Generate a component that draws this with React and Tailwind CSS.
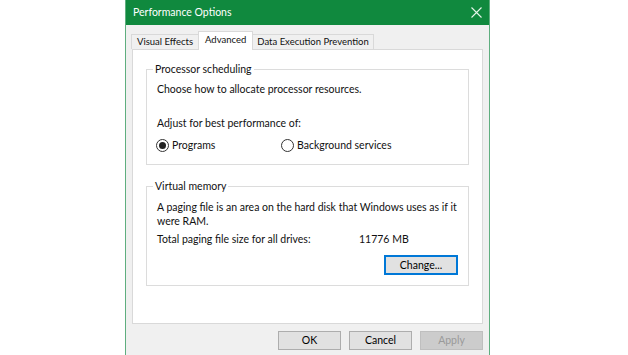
import React from "react";

const font = { fontFamily: 'Lato, "Noto Sans", sans-serif' };

function Radio({ checked, label }) {
  return (
    <label className="flex items-center gap-[3px]">
      <span className="w-[13px] h-[13px] rounded-full border border-[#333] bg-white flex items-center justify-center">
        {checked && <span className="w-[7px] h-[7px] rounded-full bg-[#222]" />}
      </span>
      <span>{label}</span>
    </label>
  );
}

function Button({ children, primary, disabled, className = "" }) {
  return (
    <button
      className={`h-[19px] flex items-center justify-center leading-none ${
        disabled
          ? "bg-[#cccccc] border border-[#bfbfbf] text-[#9a9a9a]"
          : primary
            ? "bg-[#e1e1e1] border-2 border-[#0078d7] text-black"
            : "bg-[#e1e1e1] border border-[#adadad] text-black"
      } ${className}`}
    >
      {children}
    </button>
  );
}

export default function App() {
  return (
    <div
      className="w-[628px] h-[355px] bg-white flex overflow-hidden text-[10.5px] text-[#111]"
      style={font}
    >
      <div className="ml-[125px] w-[365px] h-[355px] border-x border-[#5fae7f] bg-[#f0f0f0] flex flex-col">
        <div className="h-[25px] bg-[#10893e] flex items-center justify-between pl-[7px] pr-[7px] text-white">
          <span className="text-[10.5px]">Performance Options</span>
          <svg width="11" height="11" viewBox="0 0 11 11" stroke="#e6f4ea" strokeWidth="1.1">
            <path d="M0.5 0.5 L10.5 10.5 M10.5 0.5 L0.5 10.5" />
          </svg>
        </div>

        <div className="pt-[5px] px-[6px]">
          <div className="flex items-end h-[19px] -ml-[1px] whitespace-nowrap text-[9.5px]">
            <div className="h-[15px] px-[5px] shrink-0 border border-b-0 border-[#d9d9d9] bg-[#f0f0f0] flex items-center">
              Visual Effects
            </div>
            <div className="h-[19px] px-[6px] shrink-0 -mx-[1px] border border-b-0 border-[#d9d9d9] bg-white flex items-center pb-[2px] relative z-10 -mb-[1px]">
              Advanced
            </div>
            <div className="h-[15px] px-[4px] shrink-0 border border-b-0 border-[#d9d9d9] bg-[#f0f0f0] flex items-center">
              Data Execution Prevention
            </div>
          </div>

          <div className="h-[275px] bg-white border border-[#d9d9d9] px-[13px] pt-[12px]">
            <fieldset className="border border-[#dcdcdc] px-[10px] pb-[11px] leading-[15px]">
              <legend className="ml-[-4px] px-[2px]">Processor scheduling</legend>
              <div className="mt-[5px]">Choose how to allocate processor resources.</div>
              <div className="mt-[19px]">Adjust for best performance of:</div>
              <div className="mt-[7px] flex">
                <div className="w-[125px] -ml-[1px]">
                  <Radio checked label="Programs" />
                </div>
                <Radio label="Background services" />
              </div>
            </fieldset>

            <fieldset className="mt-[14px] border border-[#dcdcdc] px-[10px] pb-[10px] leading-[14px]">
              <legend className="ml-[-4px] px-[2px] leading-[15px]">Virtual memory</legend>
              <div className="mt-[6px] whitespace-nowrap">
                A paging file is an area on the hard disk that Windows uses as if it
                <br />
                were RAM.
              </div>
              <div className="mt-[4px] flex">
                <span className="w-[202px]">Total paging file size for all drives:</span>
                <span>11776 MB</span>
              </div>
              <div className="mt-[9px] flex justify-end">
                <Button primary className="w-[74px] h-[20px]">
                  Change...
                </Button>
              </div>
            </fieldset>
          </div>

          <div className="mt-[7px] flex justify-end gap-[8px]">
            <Button className="w-[63px]">OK</Button>
            <Button className="w-[63px]">Cancel</Button>
            <Button disabled className="w-[63px]">
              Apply
            </Button>
          </div>
        </div>
      </div>
    </div>
  );
}
